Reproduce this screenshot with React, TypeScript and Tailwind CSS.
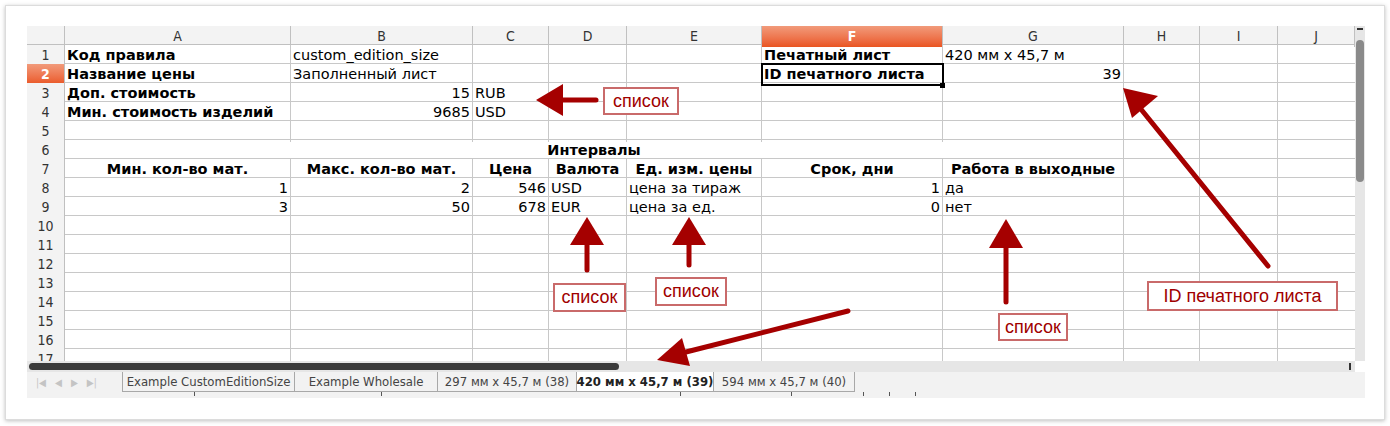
import React from "react";

const tpl = "38px 226px 182px 76px 78px 135px 181px 181px 76px 78px 77px";
const letters = ["A", "B", "C", "D", "E", "F", "G", "H", "I", "J"];

type C = { t?: string; b?: boolean; r?: boolean; c?: boolean };
const rows: Record<number, Record<number, C>> = {
  1: { 0: { t: "Код правила", b: true }, 1: { t: "custom_edition_size" }, 5: { t: "Печатный лист", b: true }, 6: { t: "420 мм x 45,7 м" } },
  2: { 0: { t: "Название цены", b: true }, 1: { t: "Заполненный лист" }, 5: { t: "ID печатного листа", b: true }, 6: { t: "39", r: true } },
  3: { 0: { t: "Доп. стоимость", b: true }, 1: { t: "15", r: true }, 2: { t: "RUB" } },
  4: { 0: { t: "Мин. стоимость изделий", b: true }, 1: { t: "9685", r: true }, 2: { t: "USD" } },
  7: {
    0: { t: "Мин. кол-во мат.", b: true, c: true }, 1: { t: "Макс. кол-во мат.", b: true, c: true }, 2: { t: "Цена", b: true, c: true },
    3: { t: "Валюта", b: true, c: true }, 4: { t: "Ед. изм. цены", b: true, c: true }, 5: { t: "Срок, дни", b: true, c: true }, 6: { t: "Работа в выходные", b: true, c: true },
  },
  8: { 0: { t: "1", r: true }, 1: { t: "2", r: true }, 2: { t: "546", r: true }, 3: { t: "USD" }, 4: { t: "цена за тираж" }, 5: { t: "1", r: true }, 6: { t: "да" } },
  9: { 0: { t: "3", r: true }, 1: { t: "50", r: true }, 2: { t: "678", r: true }, 3: { t: "EUR" }, 4: { t: "цена за ед." }, 5: { t: "0", r: true }, 6: { t: "нет" } },
};

const font = { fontFamily: '"DejaVu Sans",sans-serif' };
const condensed = { fontFamily: '"DejaVu Sans Condensed","DejaVu Sans",sans-serif' };
const R = "#a50000";

function Box({ x, y, w, h, t }: { x: number; y: number; w: number; h: number; t: string }) {
  return (
    <div
      className="absolute flex items-center justify-center bg-white border-2 border-[#c96a6a] text-[#a00000] text-[18px]"
      style={{ left: x, top: y, width: w, height: h, fontFamily: '"Liberation Sans",Arial,sans-serif' }}
    >
      {t}
    </div>
  );
}

export default function App() {
  const rowNums = Array.from({ length: 17 }, (_, i) => i + 1);
  return (
    <div className="relative w-[1390px] h-[426px] bg-white overflow-hidden" style={font}>
      <div className="absolute left-[5px] top-[5px] w-[1380px] h-[415px] bg-white border border-[#dcdcdc] shadow-[0_1px_4px_rgba(0,0,0,0.25)]" />
      <div className="absolute left-[27px] top-[26px] w-[1338px] flex flex-col text-[14.5px] text-black">
        <div className="flex">
          <div className="flex flex-col w-[1328px]">
            <div className="grid h-[19px] bg-[#f3f3f3] border-b border-[#c0c0c0]" style={{ gridTemplateColumns: tpl, ...condensed }}>
              <div className="border-r border-[#c0c0c0]" />
              {letters.map((l, i) => (
                <div
                  key={l}
                  className={`flex items-center justify-center border-r border-[#c0c0c0] text-[14px] ${i === 5 ? "bg-gradient-to-b from-[#f19a7a] to-[#e9541f] text-white font-bold" : "text-[#333]"}`}
                >
                  {l}
                </div>
              ))}
            </div>
            <div className="h-[316px] overflow-hidden">
              {rowNums.map((n) => {
                const r = rows[n] || {};
                return (
                  <div key={n} className="grid h-[19px] border-b border-[#c8c8c8]" style={{ gridTemplateColumns: tpl }}>
                    <div
                      className={`flex items-center justify-center border-r border-[#c0c0c0] text-[14px] ${n === 2 ? "bg-gradient-to-b from-[#f19a7a] to-[#e9541f] text-white font-bold" : "bg-[#f3f3f3] text-[#333]"}`}
                      style={condensed}
                    >
                      {n}
                    </div>
                    {n === 6 ? (
                      <>
                        <div className="col-span-7 flex items-center justify-center font-bold border-r border-[#c8c8c8]">Интервалы</div>
                        <div className="border-r border-[#c8c8c8]" />
                        <div className="border-r border-[#c8c8c8]" />
                        <div />
                      </>
                    ) : (
                      letters.map((_, i) => {
                        const c = r[i];
                        const sel = n === 2 && i === 5;
                        return (
                          <div
                            key={i}
                            className={`relative flex items-center px-[2px] whitespace-nowrap overflow-visible leading-none ${i < 9 ? "border-r border-[#c8c8c8]" : ""} ${c?.r ? "justify-end" : c?.c ? "justify-center" : ""} ${c?.b ? "font-bold" : ""} ${sel ? "outline-2 outline-black -outline-offset-1 z-10" : ""}`}
                          >
                            {c?.t}
                            {sel && <div className="absolute right-[-3px] bottom-[-3px] w-[5px] h-[5px] bg-black" />}
                          </div>
                        );
                      })
                    )}
                  </div>
                );
              })}
            </div>
          </div>
          <div className="w-[10px] bg-[#e6e6e6] relative">
            <div className="absolute left-[2px] top-[2px] w-[6px] h-[2px] bg-[#333]" />
            <div className="absolute left-[1px] top-[14px] w-[8px] h-[142px] rounded bg-[#8a8a8a]" />
          </div>
        </div>
        <div className="h-[11px] bg-[#e6e6e6] relative w-[1328px]">
          <div className="absolute left-[2px] top-[2px] w-[590px] h-[7px] rounded bg-[#3b3b3b]" />
          <div className="absolute right-[4px] top-[2px] w-[2px] h-[7px] bg-[#333]" />
        </div>
        <div className="flex h-[20px] bg-[#f2f2f2] w-[1338px] text-[13px]" style={condensed}>
          <div className="w-[96px] flex items-center gap-[9px] pl-[9px] text-[#c4c4c4] text-[10px]">
            <span>|◀</span><span>◀</span><span>▶</span><span>▶|</span>
          </div>
          {[
            ["Example CustomEditionSize", 173],
            ["Example Wholesale", 144],
            ["297 мм x 45,7 м (38)", 140],
            ["420 мм x 45,7 м (39)", 138],
            ["594 мм x 45,7 м (40)", 142],
          ].map(([t, w], i) => (
            <div
              key={i}
              className={`flex items-center justify-center whitespace-nowrap border border-[#a8a8a8] border-t-0 -ml-px first:ml-0 ${i === 3 ? "bg-white font-bold text-[#222]" : "bg-[#f2f2f2] text-[#444]"}`}
              style={{ width: w as number }}
            >
              {t}
            </div>
          ))}
        </div>
        <div className="h-[6px] bg-[#f2f2f2] w-[1338px] relative">
          {[167, 354, 653, 764, 836, 862, 888].map((x) => (
            <div key={x} className="absolute top-0 w-px h-[4px] bg-[#555]" style={{ left: x }} />
          ))}
        </div>
      </div>

      <svg className="absolute left-0 top-0" width="1390" height="426">
        <g fill={R} stroke={R} strokeLinecap="round">
          <line x1="596" y1="100" x2="560" y2="100" strokeWidth="5" />
          <polygon points="536,100 563,84 563,116" stroke="none" />
          <line x1="587" y1="270" x2="587" y2="240" strokeWidth="5" />
          <polygon points="587,217 570,245 604,245" stroke="none" />
          <line x1="689" y1="265" x2="689" y2="240" strokeWidth="5" />
          <polygon points="689,217 672,245 706,245" stroke="none" />
          <line x1="1006" y1="302" x2="1006" y2="245" strokeWidth="5" />
          <polygon points="1006,219 989,248 1023,248" stroke="none" />
          <line x1="1268" y1="266" x2="1140" y2="108" strokeWidth="5" />
          <polygon points="1123,88 1158,96 1132,118" stroke="none" />
          <line x1="848" y1="311" x2="686" y2="352" strokeWidth="5" />
          <polygon points="657,360 682,338 690,366" stroke="none" />
        </g>
      </svg>
      <Box x={603} y={87} w={76} h={28} t="список" />
      <Box x={553} y={283} w={73} h={29} t="список" />
      <Box x={655} y={277} w={72} h={29} t="список" />
      <Box x={998} y={313} w={70} h={28} t="список" />
      <Box x={1147} y={281} w={191} h={30} t="ID печатного листа" />
    </div>
  );
}
